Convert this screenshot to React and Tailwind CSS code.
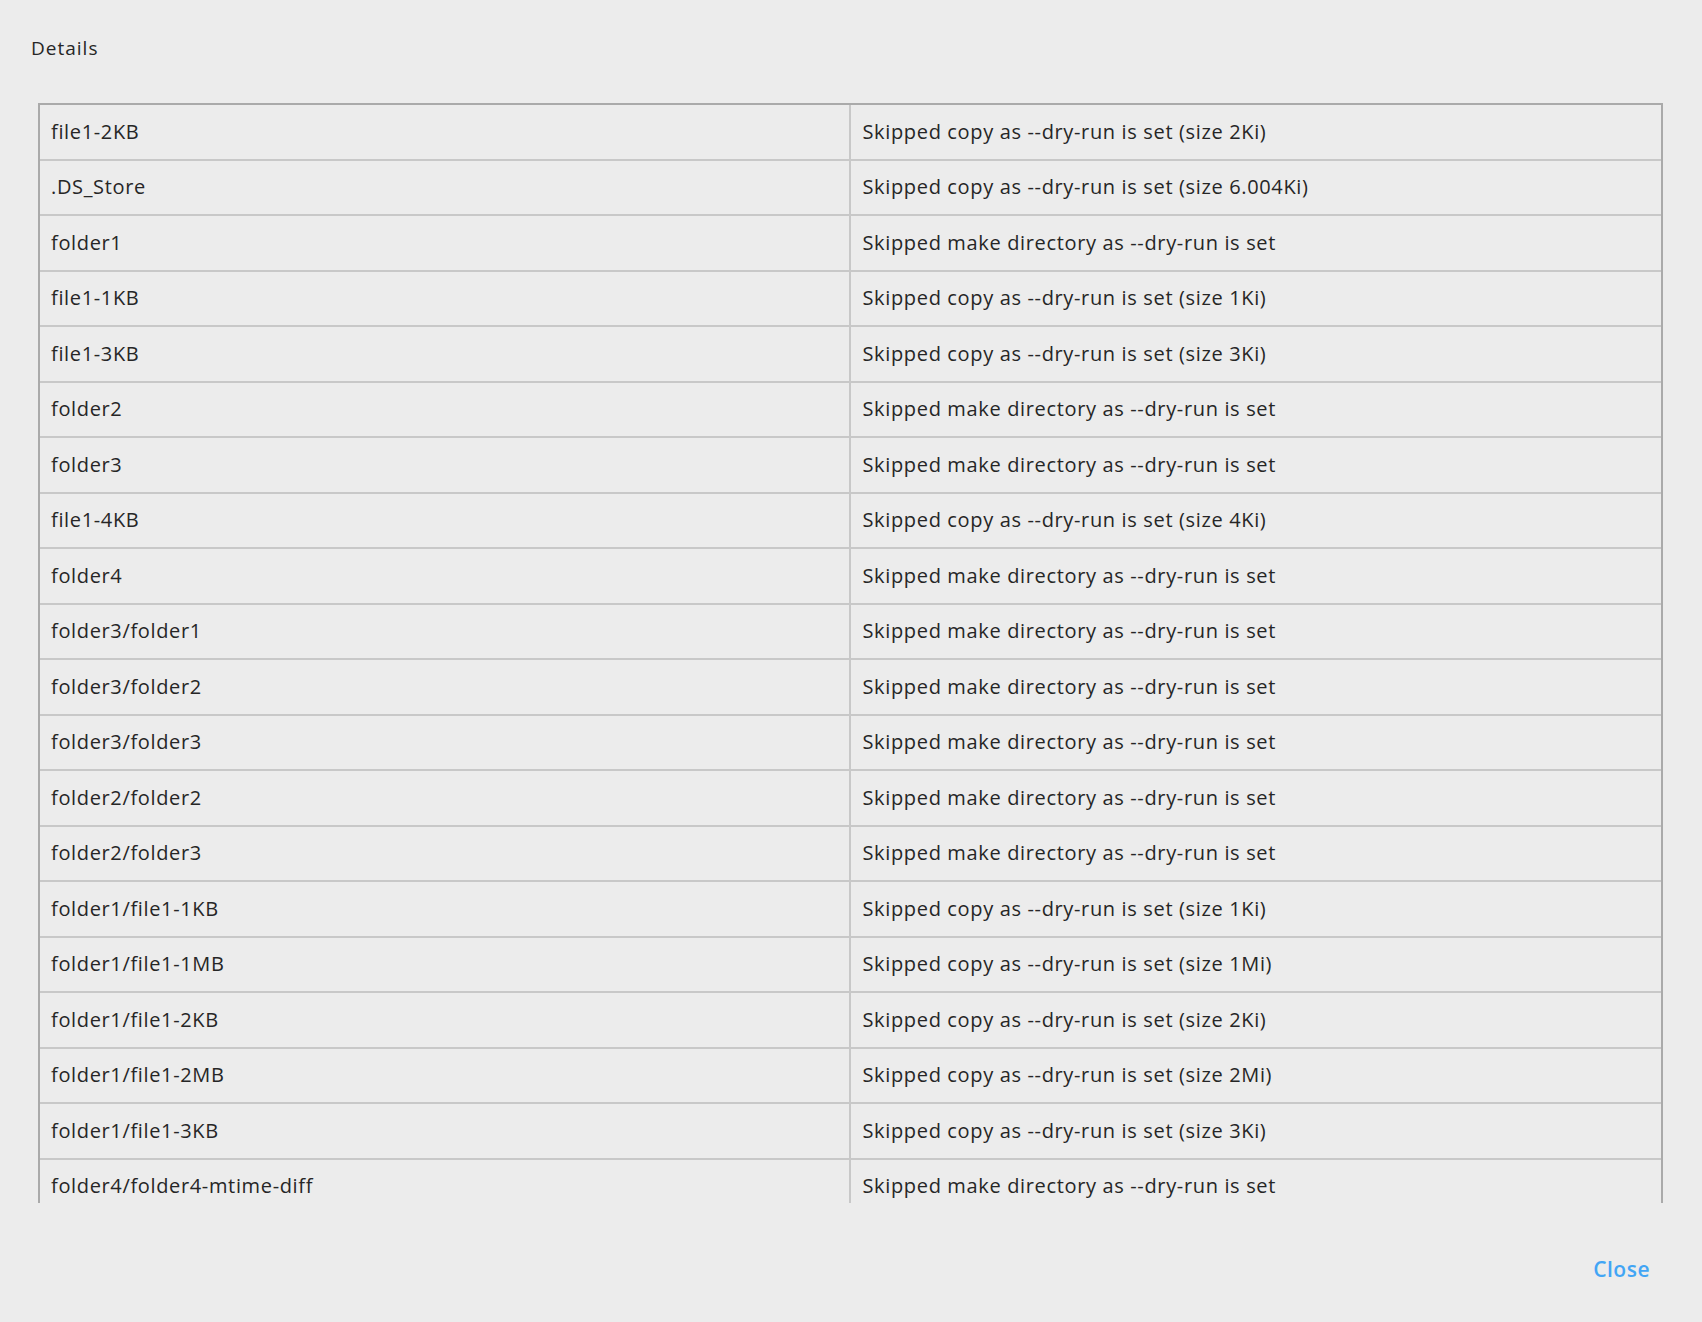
const rows = [
  ["file1-2KB", "Skipped copy as --dry-run is set (size 2Ki)"],
  [".DS_Store", "Skipped copy as --dry-run is set (size 6.004Ki)"],
  ["folder1", "Skipped make directory as --dry-run is set"],
  ["file1-1KB", "Skipped copy as --dry-run is set (size 1Ki)"],
  ["file1-3KB", "Skipped copy as --dry-run is set (size 3Ki)"],
  ["folder2", "Skipped make directory as --dry-run is set"],
  ["folder3", "Skipped make directory as --dry-run is set"],
  ["file1-4KB", "Skipped copy as --dry-run is set (size 4Ki)"],
  ["folder4", "Skipped make directory as --dry-run is set"],
  ["folder3/folder1", "Skipped make directory as --dry-run is set"],
  ["folder3/folder2", "Skipped make directory as --dry-run is set"],
  ["folder3/folder3", "Skipped make directory as --dry-run is set"],
  ["folder2/folder2", "Skipped make directory as --dry-run is set"],
  ["folder2/folder3", "Skipped make directory as --dry-run is set"],
  ["folder1/file1-1KB", "Skipped copy as --dry-run is set (size 1Ki)"],
  ["folder1/file1-1MB", "Skipped copy as --dry-run is set (size 1Mi)"],
  ["folder1/file1-2KB", "Skipped copy as --dry-run is set (size 2Ki)"],
  ["folder1/file1-2MB", "Skipped copy as --dry-run is set (size 2Mi)"],
  ["folder1/file1-3KB", "Skipped copy as --dry-run is set (size 3Ki)"],
  ["folder4/folder4-mtime-diff", "Skipped make directory as --dry-run is set"],
];

export default function App() {
  return (
    <div
      className="w-[1702px] h-[1322px] bg-[#ececec] text-[#262626] overflow-hidden flex flex-col"
      style={{ fontFamily: '"Segoe UI", "Open Sans", "Noto Sans", sans-serif' }}
    >
      <div className="pl-[31px] pt-[35px] h-[103px] text-[19px] tracking-[1px] leading-[26px]">Details</div>
      <div className="ml-[38px] w-[1625px] h-[1100px] overflow-hidden border-t-2 border-x-2 border-[#aaaaaa]">
        {rows.map(([a, b], i) => (
          <div key={i} className="grid grid-cols-2 h-[55.5px] border-b-2 border-[#c8c8c8] text-[20px] tracking-[0.65px]">
            <div className="flex items-center pl-[11px] border-r-2 border-[#c8c8c8]">{a}</div>
            <div className="flex items-center pl-[12px]">{b}</div>
          </div>
        ))}
      </div>
      <div className="flex justify-end pr-[52px] pt-[52px]">
        <button className="text-[21px] font-semibold tracking-[0.5px] text-[#42a5f5] leading-[28px]">Close</button>
      </div>
    </div>
  );
}
